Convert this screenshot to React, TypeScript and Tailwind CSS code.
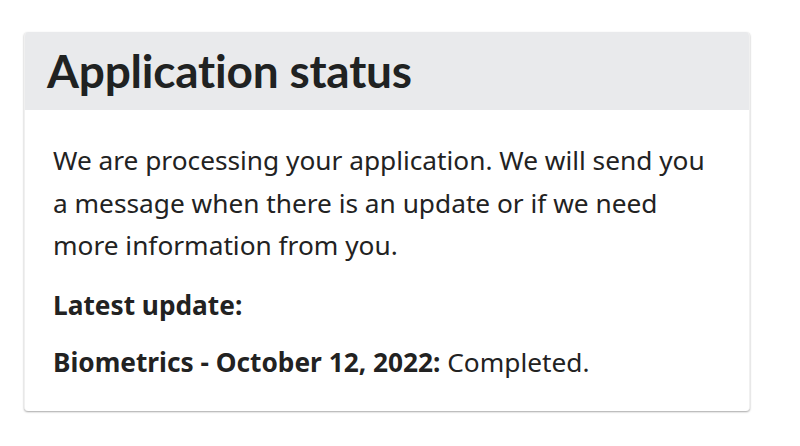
import React from 'react';

const App: React.FC = () => {
  return (
    <div className="min-h-screen w-full bg-white pt-8 pl-6">
      <div className="w-[726px] rounded-[4px] border-x border-[#f0f0f0] bg-white shadow-[0_1px_2px_rgba(0,0,0,0.35)] overflow-hidden">
        <div className="h-[78px] bg-[#e9eaec] px-[22px] flex items-center">
          <h2 className="font-['Lato',sans-serif] text-[46px] font-bold leading-none text-[#202222] tracking-[-0.2px]">
            Application status
          </h2>
        </div>
        <div className="pl-7 pr-9 pt-[29px] pb-[28px] font-['Noto_Sans',sans-serif] text-[26.25px] text-[#222222]">
          <p className="leading-[42.5px]">
            We are processing your application. We will send you a message when there is an update or if we need more
            information from you.
          </p>
          <p className="mt-[17px] leading-[42px] font-bold">Latest update:</p>
          <p className="mt-[15px] leading-[42px]">
            <span className="font-bold">Biometrics - October 12, 2022:</span> Completed.
          </p>
        </div>
      </div>
    </div>
  );
};

export default App;
